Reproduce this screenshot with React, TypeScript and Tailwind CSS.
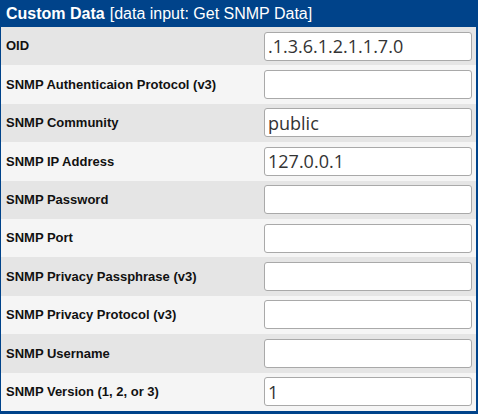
import React from "react";

// Custom data rows for the SNMP data input
const fields: { label: string; value: string }[] = [
  { label: "OID", value: ".1.3.6.1.2.1.1.7.0" },
  { label: "SNMP Authenticaion Protocol (v3)", value: "" },
  { label: "SNMP Community", value: "public" },
  { label: "SNMP IP Address", value: "127.0.0.1" },
  { label: "SNMP Password", value: "" },
  { label: "SNMP Port", value: "" },
  { label: "SNMP Privacy Passphrase (v3)", value: "" },
  { label: "SNMP Privacy Protocol (v3)", value: "" },
  { label: "SNMP Username", value: "" },
  { label: "SNMP Version (1, 2, or 3)", value: "1" },
];

const App: React.FC = () => {
  return (
    <div className="w-[478px] h-[414px] bg-[#00438a] pl-[1px] pr-[2px] pb-[3px] font-['Liberation_Sans',Arial,sans-serif]">
      <div className="h-[27px] flex items-center px-[5px] text-white text-[16px] leading-none">
        <span className="font-bold">Custom Data</span>
        <span className="ml-[5px]">[data input: Get SNMP Data]</span>
      </div>
      <div className="flex flex-col">
        {fields.map((f, i) => (
          <div
            key={f.label}
            className={`h-[38.4px] flex items-center ${i % 2 === 0 ? "bg-[#e5e5e5]" : "bg-[#f5f5f5]"}`}
          >
            <div className="w-[257px] pl-[5px] text-[13px] font-bold text-[#111]">{f.label}</div>
            <div className="flex-1 pl-[6px] pr-[4px]">
              <input
                readOnly
                value={f.value}
                className="w-full h-[29px] bg-white border border-[#a9a9a9] rounded-[3px] px-[3px] text-[18px] text-[#333] font-['Open_Sans','DejaVu_Sans',sans-serif] outline-none"
              />
            </div>
          </div>
        ))}
      </div>
    </div>
  );
};

export default App;
